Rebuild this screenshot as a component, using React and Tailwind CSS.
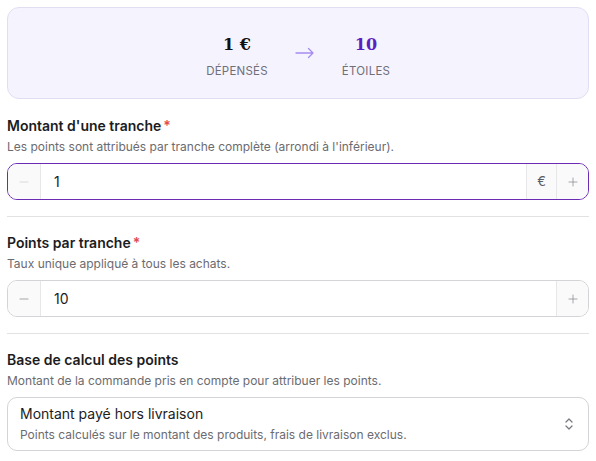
import React from 'react';

const Minus = () => (
  <svg width="12" height="12" viewBox="0 0 24 24" fill="none" stroke="currentColor" strokeWidth="1.5" strokeLinecap="round">
    <path d="M4 12h16" />
  </svg>
);

const Plus = () => (
  <svg width="12" height="12" viewBox="0 0 24 24" fill="none" stroke="currentColor" strokeWidth="1.5" strokeLinecap="round">
    <path d="M4 12h16M12 4v16" />
  </svg>
);

const Label = ({ children, required }) => (
  <div className="text-[14px] leading-[18px] font-semibold text-[#1c1c1e]">
    {children}
    {required && <span className="text-[#e5484d] ml-0.5">*</span>}
  </div>
);

const Hint = ({ children }) => (
  <div className="mt-1 text-[12px] leading-4 text-[#6b6b70]">{children}</div>
);

const NumberField = ({ value, suffix, focused, disabledMinus }) => (
  <div
    className={`mt-2 flex h-[37px] items-stretch overflow-hidden rounded-[10px] bg-white ${
      focused ? 'border-[1.5px] border-[#6b2bb5]' : 'border border-[#d4d4d8]'
    }`}
  >
    <div
      className={`flex w-[33px] items-center justify-center border-r border-[#e7e7ea] bg-[#fafafa] ${
        disabledMinus ? 'text-[#d0d0d4]' : 'text-[#8a8a90]'
      }`}
    >
      <Minus />
    </div>
    <div className="flex flex-1 items-center pl-[13px] text-[14px] text-[#1c1c1e]">{value}</div>
    {suffix && (
      <div className="flex w-[30px] items-center justify-center border-l border-[#e7e7ea] bg-[#fafafa] text-[13px] text-[#5c5c62]">
        {suffix}
      </div>
    )}
    <div className="flex w-[32px] items-center justify-center border-l border-[#e7e7ea] bg-[#fafafa] text-[#8a8a90]">
      <Plus />
    </div>
  </div>
);

export default function App() {
  return (
    <div
      className="min-h-screen bg-white px-[7px] pt-[7px]"
      style={{ fontFamily: 'Inter, "Noto Sans", sans-serif' }}
    >
      {/* Summary */}
      <div className="flex h-[92px] items-center justify-center rounded-[12px] border border-[#e2def2] bg-[#f5f3fe] pt-[7px] pl-[7px]">
        <div className="flex items-start">
          <div className="flex w-[90px] flex-col items-center">
            <div
              className="text-[16px] leading-5 font-black text-[#111]"
              style={{ fontFamily: '"DejaVu Serif", serif' }}
            >
              1 €
            </div>
            <div className="mt-[8px] text-[11.5px] leading-4 tracking-[0.02em] text-[#6f6f78]">DÉPENSÉS</div>
          </div>
          <div className="ml-[13px] mr-[6px] mt-[12px] text-[#a58cf0]">
            <svg width="20" height="12" viewBox="0 0 20 12" fill="none" stroke="currentColor" strokeWidth="1.3" strokeLinecap="round" strokeLinejoin="round">
              <path d="M1 6h17M13.5 1.5 18 6l-4.5 4.5" />
            </svg>
          </div>
          <div className="flex w-[90px] flex-col items-center">
            <div
              className="text-[16px] leading-5 font-black text-[#5b1fc0]"
              style={{ fontFamily: '"DejaVu Serif", serif' }}
            >
              10
            </div>
            <div className="mt-[8px] text-[11.5px] leading-4 tracking-[0.02em] text-[#6f6f78]">ÉTOILES</div>
          </div>
        </div>
      </div>

      {/* Montant d'une tranche */}
      <div className="border-b border-[#e2e2e5] pt-[18px] pb-4">
        <Label required>Montant d'une tranche</Label>
        <Hint>Les points sont attribués par tranche complète (arrondi à l'inférieur).</Hint>
        <NumberField value="1" suffix="€" focused disabledMinus />
      </div>

      {/* Points par tranche */}
      <div className="border-b border-[#e2e2e5] pt-[17px] pb-4">
        <Label required>Points par tranche</Label>
        <Hint>Taux unique appliqué à tous les achats.</Hint>
        <NumberField value="10" />
      </div>

      {/* Base de calcul */}
      <div className="pt-[17px]">
        <Label>Base de calcul des points</Label>
        <Hint>Montant de la commande pris en compte pour attribuer les points.</Hint>
        <div className="mt-[8px] flex h-[54px] items-center justify-between rounded-[10px] border border-[#d4d4d8] bg-white pl-[12px] pr-[13px]">
          <div>
            <div className="text-[14px] leading-[18px] text-[#1c1c1e]">Montant payé hors livraison</div>
            <div className="mt-[4px] text-[12px] leading-4 text-[#6b6b70]">
              Points calculés sur le montant des produits, frais de livraison exclus.
            </div>
          </div>
          <svg width="12" height="16" viewBox="0 0 12 16" fill="none" stroke="#7a7a80" strokeWidth="1.3" strokeLinecap="round" strokeLinejoin="round">
            <path d="M3 6l3-3 3 3M3 10l3 3 3-3" />
          </svg>
        </div>
      </div>
    </div>
  );
}
